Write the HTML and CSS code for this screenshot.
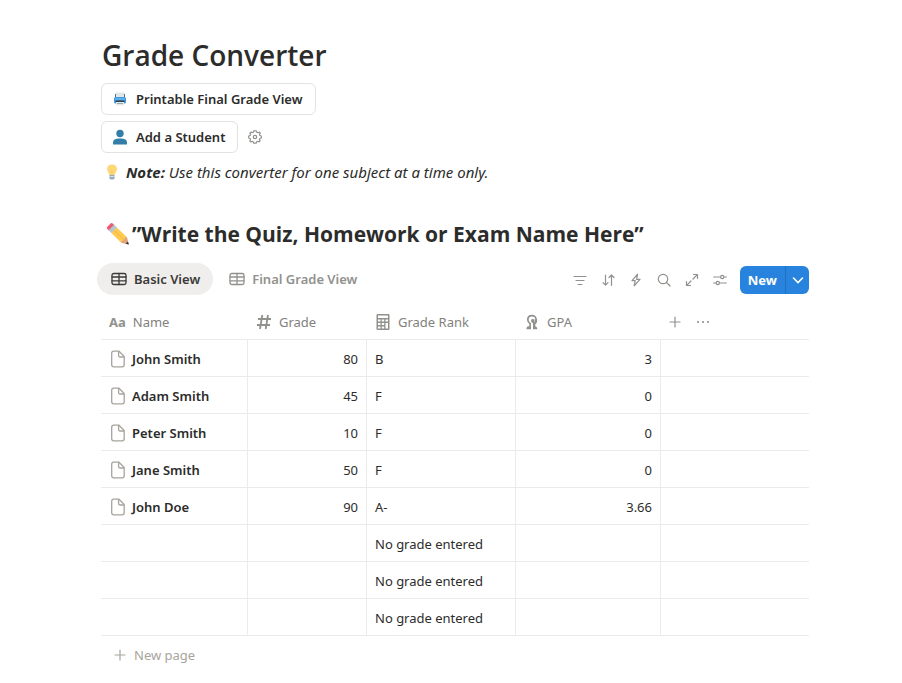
FILE: index.html
```html
<!DOCTYPE html>
<html lang="en">
<head>
    <meta charset="UTF-8">
    <meta name="viewport" content="width=device-width, initial-scale=1.0">
    <title>Grade Converter</title>
    <link rel="stylesheet" href="styles.css">
</head>
<body>
    <!-- shared icons -->
    <svg class="sprite" aria-hidden="true">
        <symbol id="i-table" viewBox="0 0 16 16">
            <rect x="1" y="2.5" width="14" height="11" rx="1.8"/>
            <path d="M1 6H15M1 9.8H15M8 2.5V13.5"/>
        </symbol>
        <symbol id="i-page" viewBox="0 0 16 18">
            <path d="M3.7 1.2H9L14.2 6.5V14.8Q14.2 16.8 12.2 16.8H3.7Q1.7 16.8 1.7 14.8V3.2Q1.7 1.2 3.7 1.2Z"/>
            <path d="M8.6 1.5V5.5Q8.6 7 10.1 7H14"/>
        </symbol>
        <symbol id="i-plus" viewBox="0 0 12 12">
            <path d="M6 1V11M1 6H11"/>
        </symbol>
    </svg>

    <main class="page">
        <h1 class="title">Grade Converter</h1>

        <div class="actions">
            <button class="action" type="button">
                <svg class="action-icon" viewBox="0 0 16 16" aria-hidden="true">
                    <rect x="3.5" y="1.5" width="9" height="5" fill="#dfe6ea"/>
                    <path d="M3.5 3V7M12.5 3V7" stroke="#546e7a"/>
                    <rect x="2" y="6" width="12" height="6.5" rx="1.5" fill="#429add"/>
                    <path d="M3 8H13" stroke="#73c2f5"/>
                    <rect x="3.5" y="9.5" width="9" height="1.5" fill="#31414d"/>
                    <rect x="4" y="11" width="8" height="3.5" rx="0.5" fill="#e4eaed"/>
                    <path d="M5 12.5H11" stroke="#9aa8b0"/>
                </svg>
                Printable Final Grade View
            </button>
        </div>
        <div class="actions">
            <button class="action" type="button">
                <svg class="action-icon" viewBox="0 0 16 16" aria-hidden="true">
                    <circle cx="8" cy="4.5" r="3.7" fill="#337ea9"/>
                    <path d="M1 15.5V13.5C1 10.8 3.5 9.4 8 9.4S15 10.8 15 13.5V15.5Z" fill="#337ea9"/>
                </svg>
                Add a Student
            </button>
            <button class="gear" type="button" aria-label="Button settings">
                <svg class="line-icon" viewBox="0 0 14 14">
                    <path d="M5.7 0.8H8.3L8.7 2.2L10 2.8L11.4 2.1L12.3 3.1L11.4 4.5L11.9 5.5L13.3 6V8L11.9 8.5L11.4 9.6L12.1 10.9L11.1 11.9L9.7 11.3L8.7 11.8L8.3 13.2H5.7L5.2 11.8L4.2 11.3L2.9 12L1.9 11L2.5 9.6L2.1 8.5L0.7 8V6L2.1 5.5L2.6 4.4L1.9 3.1L2.9 2.1L4.3 2.7L5.3 2.2Z"/>
                    <circle cx="7" cy="7" r="1.7"/>
                </svg>
            </button>
        </div>

        <p class="note">
            <svg class="bulb" viewBox="0 0 14 16" aria-hidden="true">
                <path d="M7 0.5C3.8 0.5 2 2.6 2 5.2C2 7.9 4.3 8.8 4.4 11.2H9.6C9.7 8.8 12 7.9 12 5.2C12 2.6 10.2 0.5 7 0.5Z" fill="#fdd877"/>
                <path d="M5.5 6L7 7L8.5 6M6.2 7V11M7.8 7V11" fill="none" stroke="#f9c860" stroke-width="0.6"/>
                <path d="M4.5 11H9.5V14.2L8.3 15.5H5.7L4.5 14.2Z" fill="#94a9b9"/>
                <path d="M4.5 12.6H9.5" stroke="#d6e0e7"/>
            </svg>
            <em><strong>Note:</strong> Use this converter for one subject at a time only.</em>
        </p>

        <h2 class="heading">
            <svg class="pencil" viewBox="0 0 24 24" aria-hidden="true">
                <path d="M1 5.2L4.5 1.5Q5.7 0.6 7 1.8L8.2 3L2.8 8.4L1.3 6.9Q0.5 6 1 5.2Z" fill="#ee5a6f"/>
                <path d="M2.6 8.2L8 2.8L10.8 5.6L5.4 11Z" fill="#a9b9c3"/>
                <path d="M3.5 9.1L8.9 3.7M4.5 10.1L9.9 4.7" stroke="#dbe3e8" stroke-width="0.6"/>
                <path d="M5.4 11L10.8 5.6L21 15.3L15.2 20.8Z" fill="#ffca4f"/>
                <path d="M8 8.3L18.2 18" stroke="#f6b940"/>
                <path d="M15.2 20.8L16.2 18.5L18.1 18L18.6 16L21 15.3L22.8 22.6Z" fill="#dfa47a"/>
                <path d="M22.8 22.6L19.6 21.8L22 19.4Z" fill="#39332f"/>
            </svg>
            <span>”Write the Quiz, Homework or Exam Name Here”</span>
        </h2>

        <div class="toolbar">
            <nav class="views">
                <a class="view active" href="#basic"><svg class="line-icon"><use href="#i-table"/></svg>Basic View</a>
                <a class="view" href="#final"><svg class="line-icon"><use href="#i-table"/></svg>Final Grade View</a>
            </nav>
            <div class="tools">
                <button class="tool" type="button" aria-label="Filter">
                    <svg class="line-icon" viewBox="0 0 14 14"><path d="M1 3.5H13M3 7.5H11M5 11.5H9"/></svg>
                </button>
                <button class="tool" type="button" aria-label="Sort">
                    <svg class="line-icon" viewBox="0 0 14 14"><path d="M4.5 2V12M2 9.7L4.5 12.2L7 9.7M10.5 12.3V2.2M8 4.5L10.5 2L13 4.5"/></svg>
                </button>
                <button class="tool" type="button" aria-label="Automations">
                    <svg class="line-icon" viewBox="0 0 14 14"><path d="M8.6 1.2L3 7.6H6.2L5.2 12.8L11 6.3H7.6Z"/></svg>
                </button>
                <button class="tool" type="button" aria-label="Search">
                    <svg class="line-icon" viewBox="0 0 14 14"><circle cx="6" cy="6" r="4.7"/><path d="M9.5 9.5L13 13"/></svg>
                </button>
                <button class="tool" type="button" aria-label="Expand">
                    <svg class="line-icon" viewBox="0 0 14 14"><path d="M8 6L12.3 1.7M8.5 1.5H12.5V5.5M6 8L1.7 12.3M1.5 8.5V12.5H5.5"/></svg>
                </button>
                <button class="tool" type="button" aria-label="View settings">
                    <svg class="line-icon" viewBox="0 0 14 14"><path d="M0.7 4H7.4M11 4H13.3M0.7 10H3M6.6 10H13.3"/><circle cx="9.2" cy="4" r="1.6"/><circle cx="4.8" cy="10" r="1.6"/></svg>
                </button>
                <div class="new">
                    <button class="new-main" type="button">New</button>
                    <button class="new-more" type="button" aria-label="New from template">
                        <svg viewBox="0 0 12 12"><path d="M1.5 4L6 8.5L10.5 4"/></svg>
                    </button>
                </div>
            </div>
        </div>

        <table class="grades">
            <colgroup>
                <col class="col-name">
                <col class="col-grade">
                <col class="col-rank">
                <col class="col-gpa">
                <col>
            </colgroup>
            <thead>
                <tr>
                    <th><div class="head"><span class="aa">Aa</span>Name</div></th>
                    <th>
                        <div class="head">
                            <svg class="prop-icon" viewBox="0 0 16 16" aria-hidden="true"><path d="M6.3 1L4 15M12 1L9.7 15M2 5H15M1 11H14" fill="none" stroke="#91918e" stroke-width="1.8"/></svg>
                            Grade
                        </div>
                    </th>
                    <th>
                        <div class="head">
                            <svg class="prop-icon" viewBox="0 0 16 16" aria-hidden="true">
                                <path d="M2.5 0H13.5Q14.5 0 14.5 1V15Q14.5 16 13.5 16H2.5Q1.5 16 1.5 15V1Q1.5 0 2.5 0Z" fill="#91918e"/>
                                <path d="M3 1.5H13V4H3ZM3 5.5H5.5V7.5H3ZM6.8 5.5H9.2V7.5H6.8ZM10.5 5.5H13V7.5H10.5ZM3 9H5.5V11H3ZM6.8 9H9.2V11H6.8ZM10.5 9H13V14.5H10.5ZM3 12.5H5.5V14.5H3ZM6.8 12.5H9.2V14.5H6.8Z" fill="#fff"/>
                            </svg>
                            Grade Rank
                        </div>
                    </th>
                    <th>
                        <div class="head">
                            <svg class="prop-icon" viewBox="0 0 16 16" aria-hidden="true">
                                <path d="M6.1 13V9.6C4.6 8.8 3.8 7.4 3.8 5.8C3.8 3.3 5.6 1.6 8 1.6S12.2 3.3 12.2 5.8" fill="none" stroke="#91918e" stroke-width="1.7"/>
                                <path d="M2.5 15.3V14.3Q2.5 12.3 4.5 12.3H7V15.3ZM9 15.3V9.2Q7 8.3 7 6.7Q7.2 4.8 9 4.8Q10 4.8 10 6.3V8H10.5V5.2H13Q13.6 8.8 11.3 10.2V12.3Q13.4 12.6 13.4 15.3Z" fill="#91918e"/>
                            </svg>
                            GPA
                        </div>
                    </th>
                    <th>
                        <div class="head-tools">
                            <button class="tool" type="button" aria-label="Add property"><svg class="line-icon plus"><use href="#i-plus"/></svg></button>
                            <button class="tool" type="button" aria-label="More"><svg class="line-icon" viewBox="0 0 14 14"><path class="dots" d="M2 7H2.1M7 7H7.1M12 7H12.1"/></svg></button>
                        </div>
                    </th>
                </tr>
            </thead>
            <tbody>
                <tr><td><div class="name"><svg><use href="#i-page"/></svg>John Smith</div></td><td class="num">80</td><td>B</td><td class="num">3</td><td></td></tr>
                <tr><td><div class="name"><svg><use href="#i-page"/></svg>Adam Smith</div></td><td class="num">45</td><td>F</td><td class="num">0</td><td></td></tr>
                <tr><td><div class="name"><svg><use href="#i-page"/></svg>Peter Smith</div></td><td class="num">10</td><td>F</td><td class="num">0</td><td></td></tr>
                <tr><td><div class="name"><svg><use href="#i-page"/></svg>Jane Smith</div></td><td class="num">50</td><td>F</td><td class="num">0</td><td></td></tr>
                <tr><td><div class="name"><svg><use href="#i-page"/></svg>John Doe</div></td><td class="num">90</td><td>A-</td><td class="num">3.66</td><td></td></tr>
                <tr><td></td><td></td><td>No grade entered</td><td></td><td></td></tr>
                <tr><td></td><td></td><td>No grade entered</td><td></td><td></td></tr>
                <tr><td></td><td></td><td>No grade entered</td><td></td><td></td></tr>
            </tbody>
        </table>
        <button class="new-page" type="button"><svg class="line-icon plus"><use href="#i-plus"/></svg>New page</button>
    </main>
</body>
</html>
```
FILE: styles.css
```css
*
{
    box-sizing: border-box;
}

body
{
    margin: 0;
    background: white;
    color: #2c2c2b;
    font-family: "Noto Sans", "Open Sans", sans-serif;
    font-size: 13px;
    line-height: 20px;
}

button
{
    padding: 0;
    border: none;
    background: none;
    color: inherit;
    font: inherit;
    cursor: pointer;
}

svg
{
    flex-shrink: 0;
}

.sprite
{
    display: none;
}

.page
{
    padding: 35px 93px 8px 101px;
}

.title, .heading
{
    font-family: "Open Sans", "Noto Sans", sans-serif;
}

.title
{
    margin: 0 0 8px 1px;
    font-size: 28px;
    line-height: 40px;
    font-weight: 600;
}

.actions
{
    display: flex;
    align-items: center;
    gap: 8px;
    margin-bottom: 6px;
}

.action
{
    display: flex;
    align-items: center;
    gap: 8px;
    height: 32px;
    padding: 0 12px 0 10px;
    border: 1px solid #e3e2e0;
    border-radius: 6px;
    font-weight: 600;
}

.action-icon
{
    width: 16px;
    height: 16px;
}

.line-icon
{
    width: 14px;
    height: 14px;
    fill: none;
    stroke: currentColor;
    stroke-width: 1.2;
    stroke-linecap: round;
    stroke-linejoin: round;
}

.gear
{
    display: flex;
    padding: 1px 2px;
    color: #91918e;
}

.note
{
    display: flex;
    align-items: center;
    gap: 7px;
    margin: 0;
    padding: 1px 4px;
    font-size: 15px;
    line-height: 24px;
}

.bulb
{
    width: 14px;
    height: 16px;
}

.heading
{
    display: flex;
    align-items: center;
    gap: 2px;
    margin: 34px 0 14px;
    padding-left: 5px;
    font-size: 21px;
    line-height: 30px;
    font-weight: 700;
}

.pencil
{
    width: 24px;
    height: 24px;
}

/* views and tools */
.toolbar
{
    display: flex;
    justify-content: space-between;
    align-items: center;
    margin-left: -4px;
}

.views
{
    display: flex;
    gap: 2px;
}

.view
{
    display: flex;
    align-items: center;
    gap: 7px;
    height: 32px;
    padding: 0 13px 0 14px;
    border-radius: 16px;
    color: #91918e;
    font-weight: 600;
    text-decoration: none;
}

.view .line-icon
{
    width: 16px;
    height: 16px;
    stroke-width: 1.3;
}

.view.active
{
    background: #efeeec;
    color: #3b3a38;
}

.tools, .head-tools
{
    display: flex;
    align-items: center;
}

.tools
{
    padding-top: 2px;
}

.tool
{
    display: flex;
    align-items: center;
    justify-content: center;
    width: 28px;
    height: 28px;
    color: #91918e;
}

.new
{
    display: flex;
    height: 28px;
    margin-left: 6px;
    border-radius: 6px;
    background: #2783de;
    color: white;
    overflow: hidden;
}

.new-main
{
    padding: 0 8px;
    font-weight: 700;
}

.new-more
{
    display: flex;
    align-items: center;
    justify-content: center;
    width: 24px;
    border-left: 1px solid #2071c0;
}

.new-more svg
{
    width: 12px;
    height: 12px;
    fill: none;
    stroke: white;
    stroke-width: 1.6;
    stroke-linecap: round;
}

/* grades table */
.grades
{
    width: 100%;
    margin-top: 9px;
    border-collapse: separate;
    border-spacing: 0;
    table-layout: fixed;
}

.col-name
{
    width: 147px;
}

.col-grade
{
    width: 119px;
}

.col-rank
{
    width: 149px;
}

.col-gpa
{
    width: 145px;
}

th
{
    height: 36px;
    padding: 0;
    border-bottom: 1px solid #ebebea;
    color: #82817d;
    font-weight: 400;
    text-align: left;
}

.head
{
    display: flex;
    align-items: center;
    gap: 7px;
    padding: 0 8px;
}

.prop-icon
{
    width: 16px;
    height: 16px;
}

.aa
{
    color: #91918e;
    font-weight: 700;
}

td
{
    height: 37px;
    padding: 2px 8px 0;
    border-bottom: 1px solid #ebebea;
    border-right: 1px solid #ebebea;
}

td:last-child
{
    border-right: none;
}

.num
{
    text-align: right;
}

.name
{
    display: flex;
    align-items: center;
    gap: 6px;
    padding-left: 1px;
    font-weight: 600;
}

.name svg
{
    width: 16px;
    height: 18px;
    fill: none;
    stroke: #a8a49c;
    stroke-width: 1.3;
}

.line-icon.plus
{
    width: 12px;
    height: 12px;
}

.dots
{
    stroke-width: 2;
}

.new-page
{
    display: flex;
    align-items: center;
    gap: 8px;
    height: 38px;
    padding: 0 13px;
    color: #a8a49c;
}
```
